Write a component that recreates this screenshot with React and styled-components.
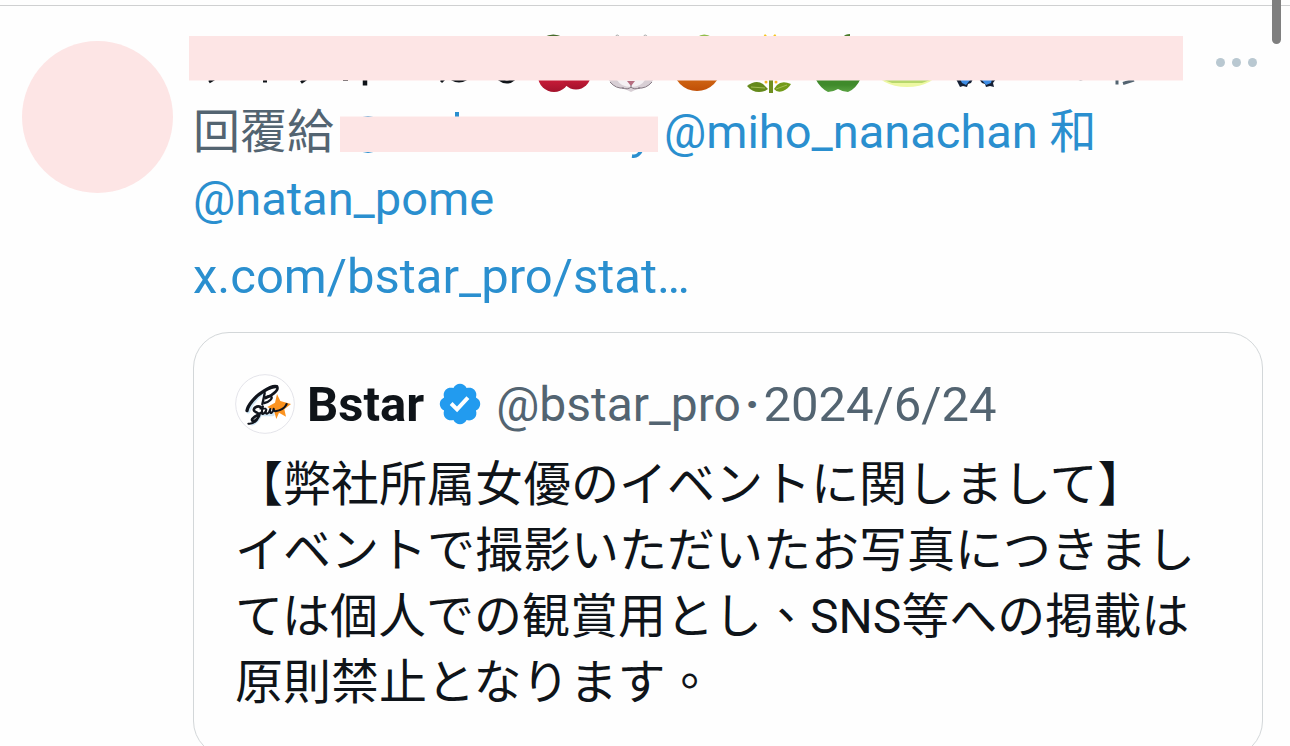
import React from 'react';
import styled, { createGlobalStyle } from 'styled-components';

const GlobalStyle = createGlobalStyle`
    * {
        box-sizing: border-box;
    }

    body {
        margin: 0;
        background-color: #fefefe;
        color: #0f1419;
        font-family: Roboto, "Noto Sans CJK TC", sans-serif;
        font-size: 48px;
        overflow: hidden;
    }
`;

/**
 * Layout
 */

const Feed = styled.main`
    position: relative;
    height: 100vh;
    padding-top: 5px;
    overflow: hidden;
`;

const Post = styled.article`
    display: flex;
    align-items: flex-start;
    gap: 20px;
    padding: 30px 27px 0 22px;
    border-top: 1px solid #cfd0d1;
`;

const PostBody = styled.div`
    flex: 1;
    min-width: 0;
`;

const ScrollThumb = styled.div`
    position: absolute;
    top: 0;
    right: 9px;
    width: 9px;
    height: 44px;
    background-color: #7f7f7f;
    border-radius: 0 0 5px 5px;
`;

/**
 * Post header
 */

const Avatar = styled.div`
    flex: none;
    width: 151px;
    height: 152px;
    margin-top: 5px;
    border-radius: 50%;
    background-color: #fde5e5;
`;

const PostHeader = styled.header`
    display: flex;
    justify-content: space-between;
    align-items: flex-start;
    height: 62px;
    margin-left: -4px;
`;

const NameArt = styled.svg`
    display: block;
    width: 994px;
    height: 62px;
    overflow: visible;
`;

const MoreButton = styled.button`
    display: flex;
    gap: 7px;
    padding: 22px 6px;
    border: 0;
    background-color: transparent;
    cursor: pointer;
`;

const MoreDot = styled.span`
    width: 9px;
    height: 9px;
    border-radius: 50%;
    background-color: #b9c8d1;
`;

/**
 * Post text
 */

const TextLink = styled.a`
    color: #2a8fcf;
    text-decoration: none;
`;

const ReplyLine = styled.p`
    margin: 0;
    color: #536471;
    font-size: 47px;
    line-height: 67px;
`;

const HandleArt = styled.svg`
    width: 318px;
    height: 46px;
    margin: 0 6px;
    vertical-align: -10px;
`;

const LinkLine = styled.p`
    margin: 11px 0 22px;
    font-size: 49px;
    line-height: 67px;
`;

/**
 * Quoted post
 */

const Quote = styled.section`
    height: 425px;
    padding: 35px 38px 0 41px;
    border: 1px solid #d3d7d9;
    border-radius: 36px;
`;

const QuoteHeader = styled.header`
    display: flex;
    align-items: center;
    height: 72px;
    color: #536471;
`;

const LogoArt = styled.svg`
    width: 60px;
    height: 60px;
    margin-right: 12px;
`;

const QuoteName = styled.strong`
    color: #0f1419;
    font-size: 49px;
    font-weight: 700;
`;

const BadgeArt = styled.svg`
    width: 42px;
    height: 42px;
    margin: 0 15px;
`;

const Separator = styled.span`
    padding: 0 4px;
    font-weight: 700;
`;

const QuoteDate = styled.time`
    font-size: 49px;
`;

const QuoteText = styled.p`
    margin: 12px 0 0;
    line-height: 66px;
`;

/**
 * Drawings
 */

const HiddenName = () => (
    <NameArt viewBox="189 36 994 62" aria-hidden="true">
        <defs>
            <linearGradient id="cherry" x1="0" y1="0" x2="0" y2="1">
                <stop offset="0.5" stopColor="#d41f3c" />
                <stop offset="1" stopColor="#a3122c" />
            </linearGradient>
            <linearGradient id="orange" x1="0" y1="0" x2="0" y2="1">
                <stop offset="0.6" stopColor="#d9731c" />
                <stop offset="1" stopColor="#c04f06" />
            </linearGradient>
            <linearGradient id="apple" x1="0" y1="0" x2="0" y2="1">
                <stop offset="0.5" stopColor="#3f8a2b" />
                <stop offset="1" stopColor="#5aa343" />
            </linearGradient>
        </defs>

        <g fill="none" stroke="#0f1419" strokeWidth="3">
            <path d="M214 79l-5 3" />
            <path d="M265 78v4.5" strokeWidth="4" />
            <path d="M306 79l-5 3.500" />
            <path d="M343 80.500h5" strokeWidth="1" />
            <path d="M365 78v7.500" strokeWidth="4.500" />
            <path d="M444 79l-3 3M452 79q7 4 14 0M499 79q8 6 15 0" />
        </g>

        <path d="M544 37q9-5 19 0z" fill="#466b2b" />
        <circle cx="554" cy="76" r="16" fill="url(#cherry)" />
        <circle cx="576" cy="75" r="14.500" fill="url(#cherry)" />

        <path d="M615 37q2-4 5 0M643 37q2-4 5 0" fill="#eee" stroke="#aaa" />
        <path d="M608 79q5 9 17 10l6 3 6-3q12-1 17-10z" fill="#d8cfd5" />
        <path d="M617 80q4 7 14 7t14-7z" fill="#f5f0f3" />
        <path d="M627 81h8l-4 5z" fill="#b66d80" />
        <path d="M631 85v3M622 88q6 2 9-1 3 3 9 1M610 82q6 7 14 6M652 82q-6 7-14 6" fill="none" stroke="#857983" />

        <path d="M697 37q7-5 15 0z" fill="#91bd4b" />
        <ellipse cx="697" cy="67" rx="24" ry="24" fill="url(#orange)" />

        <path d="M763 37l2-3 3 3zM772 37l3-3 2 3z" fill="#f7c51f" />
        <path d="M769 79h4v14h-4z" fill="#6f8f20" />
        <path d="M747 86q9-7 16-2l5 5q-3 3-9 3-7 0-12-6z" fill="#64891b" />
        <path d="M791 84q-9-4-14 1l-3 4q3 4 9 2 5-2 8-7z" fill="#729b1b" />
        <path d="M751 87l14 1M787 85l-11 4" fill="none" stroke="#a3bd55" />
        <circle cx="766" cy="82" r="1.500" fill="#f1b524" />
        <circle cx="776" cy="82" r="1.500" fill="#f1b524" />

        <path d="M843 37q2-3 7-3v3z" fill="#497b2a" />
        <path d="M815 78q5 10 13 14 5 0 10-3 5 3 10 3 8-3 13-14z" fill="url(#apple)" />

        <ellipse cx="907" cy="69" rx="32" ry="18" fill="#edf8a2" />
        <path d="M884 80h46l-8 3h-30z" fill="#b7d86c" />

        <path d="M956 79h17l-2 4-3 1-1 3-4-1-3 1-2-4z" fill="#152035" />
        <path d="M960 79h11l-5 6-4-2z" fill="#3d8de5" />
        <path d="M996 79h-17l3 4 3 1 1 3 4-1 4 1-1-4z" fill="#152035" />
        <path d="M992 79h-11l5 6 5-2z" fill="#3d8de5" />

        <path d="M1076 79q5 2 9 0" fill="none" stroke="#536471" />
        <path d="M1117 79v5.500M1134 80l-11 3.500" fill="none" stroke="#536471" strokeWidth="3" />

        <rect x="189" y="36" width="994" height="44.500" fill="#fde5e5" />
    </NameArt>
);

const HiddenHandle = () => (
    <HandleArt viewBox="340 112 318 46" aria-hidden="true">
        <path
            d="M360 118q8-3 16 0M360 151q8 3 16 0"
            fill="none"
            stroke="#2a8fcf"
            strokeWidth="1"
        />
        <path d="M455 112h4v6h-4z" fill="#2a8fcf" />
        <path d="M632 156q6 1 9-5" fill="none" stroke="#2a8fcf" strokeWidth="3.500" />
        <rect x="340" y="116.500" width="318" height="35.500" fill="#fde5e5" />
    </HandleArt>
);

const Logo = () => (
    <LogoArt viewBox="30 27 180 180" role="img" aria-label="Bstar">
        <circle cx="120" cy="117" r="88" fill="#fff" stroke="#e4e4ea" strokeWidth="3" />
        <g fill="none" stroke="#cfe6f5" strokeWidth="11" strokeLinecap="round">
            <path d="M70 140q14-38 48-60M82 176q18-8 24-30M110 148h34" />
        </g>
        <path
            d="M156 87l10 21 32 9-20 16 5 22-21-12-8 19-7-25-20-11 23-13z"
            fill="#fb9320"
        />
        <g fill="none" stroke="#10141c" strokeLinecap="round" strokeLinejoin="round">
            <path d="M66 137c2-14 22-42 49-58 17-11 34-16 40-14" strokeWidth="10" />
            <path d="M155 65c9 5-6 24-33 34" strokeWidth="8" />
            <path d="M122 97c17-8 23 0 14 8-5 5-12 8-18 9" strokeWidth="7" />
            <path d="M119 84c-2 14-5 24-7 34" strokeWidth="7" />
            <path d="M107 126c-11-6-25 5-19 12 4 5 18 6 14 15-6 15-22 19-21 11 1-7 19-15 30-22" strokeWidth="8" />
            <path d="M70 176q14 2 25-10" strokeWidth="6" />
            <path d="M114 124q-5 15-2 23 6 1 12-13-4 13 2 12 6-1 10-14-2 14 3 12 6-3 7-13 1 8 5 8 24-4 32-18 4-8 0-1" strokeWidth="6" />
            <path d="M106 131h16" strokeWidth="5" />
        </g>
    </LogoArt>
);

const VerifiedBadge = () => (
    <BadgeArt viewBox="1.250 1.250 19.500 19.500" role="img" aria-label="已認證帳戶">
        <path
            d="M20.396 11c-.018-.646-.215-1.275-.57-1.816-.354-.54-.852-.972-1.438-1.246.223-.607.27-1.264.14-1.897-.131-.634-.437-1.218-.882-1.687-.47-.445-1.053-.75-1.687-.882-.633-.13-1.290-.083-1.897.140-.273-.587-.704-1.086-1.245-1.440S11.647 1.620 11 1.604c-.646.017-1.273.213-1.813.568s-.969.854-1.240 1.440c-.608-.223-1.267-.272-1.902-.140-.635.130-1.220.436-1.690.882-.445.470-.749 1.055-.878 1.688-.130.633-.080 1.290.144 1.896-.587.274-1.087.705-1.443 1.245-.356.540-.555 1.170-.574 1.817.020.647.218 1.276.574 1.817.356.540.856.972 1.443 1.245-.224.606-.274 1.263-.144 1.896.130.634.433 1.218.877 1.688.470.443 1.054.747 1.687.878.633.132 1.290.084 1.897-.136.274.586.705 1.084 1.246 1.439.540.354 1.170.551 1.816.569.647-.016 1.276-.213 1.817-.567s.972-.854 1.245-1.440c.604.239 1.266.296 1.903.164.636-.132 1.220-.447 1.680-.907.460-.460.776-1.044.908-1.681s.075-1.299-.165-1.903c.586-.274 1.084-.705 1.439-1.246.354-.540.551-1.170.569-1.816z"
            fill="#229bef"
        />
        <path d="M9.662 14.850l-3.429-3.428 1.293-1.302 2.072 2.072 4.400-4.794 1.347 1.246z" fill="#fff" />
    </BadgeArt>
);

const App = () => (
    <React.Fragment>
        <GlobalStyle />
        <Feed lang="zh-TW">
            <Post>
                <Avatar />
                <PostBody>
                    <PostHeader>
                        <HiddenName />
                        <MoreButton aria-label="更多">
                            <MoreDot />
                            <MoreDot />
                            <MoreDot />
                        </MoreButton>
                    </PostHeader>
                    <ReplyLine>
                        回覆給
                        <HiddenHandle />
                        <TextLink href="#miho_nanachan">@miho_nanachan</TextLink>
                        {' '}
                        <TextLink as="span">和</TextLink>
                        {' '}
                        <TextLink href="#natan_pome">@natan_pome</TextLink>
                    </ReplyLine>
                    <LinkLine>
                        <TextLink href="#status">x.com/bstar_pro/stat…</TextLink>
                    </LinkLine>
                    <Quote>
                        <QuoteHeader>
                            <Logo />
                            <QuoteName>Bstar</QuoteName>
                            <VerifiedBadge />
                            <span>@bstar_pro</span>
                            <Separator>·</Separator>
                            <QuoteDate dateTime="2024-06-24">2024/6/24</QuoteDate>
                        </QuoteHeader>
                        <QuoteText>
                            【弊社所属女優のイベントに関しまして】
                            <br />
                            イベントで撮影いただいたお写真につきましては個人での観賞用とし、SNS等への掲載は原則禁止となります。
                        </QuoteText>
                    </Quote>
                </PostBody>
            </Post>
            <ScrollThumb />
        </Feed>
    </React.Fragment>
);

export default App;
